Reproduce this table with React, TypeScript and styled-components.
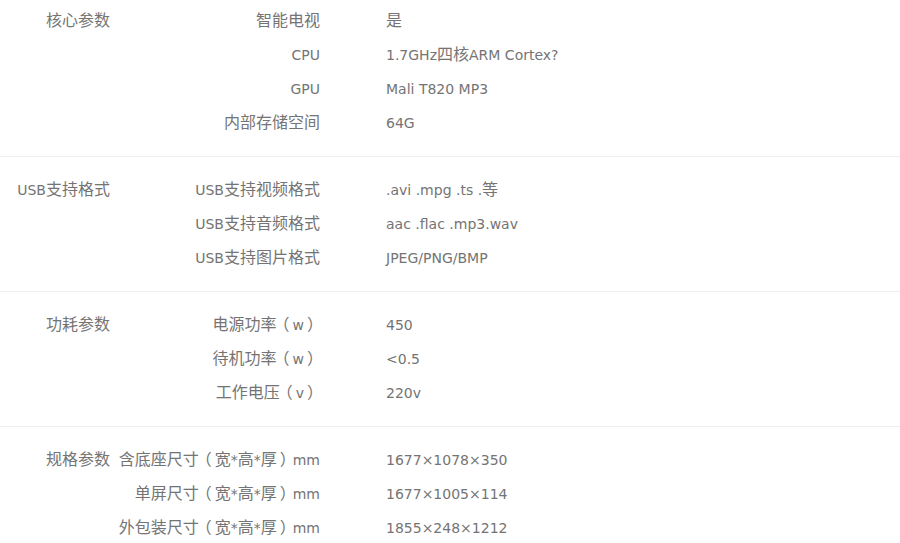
import React from "react";
import styled, { createGlobalStyle } from "styled-components";

const Global = createGlobalStyle`
  html, body { margin: 0; padding: 0; background: #fff; }
  body { font-family: "DejaVu Sans", "Noto Sans CJK SC", sans-serif; }
`;

const Page = styled.div`
  width: 900px;
  display: flex;
  flex-direction: column;
`;

const Section = styled.section<{ $first?: boolean; $last?: boolean }>`
  display: grid;
  grid-template-columns: 110px 210px 1fr;
  grid-auto-rows: 34px;
  padding: ${(p) => (p.$first ? "4px" : "16px")} 0 16px;
  border-bottom: ${(p) => (p.$last ? "none" : "1px solid #eeeeee")};
  color: #747474;
  font-size: 14px;
`;

const Category = styled.div<{ $rows: number }>`
  grid-column: 1;
  grid-row: 1 / span ${(p) => p.$rows};
  text-align: right;
  line-height: 34px;
  white-space: nowrap;
`;

const Label = styled.div`
  grid-column: 2;
  text-align: right;
  line-height: 34px;
  white-space: nowrap;
`;

const Value = styled.div`
  grid-column: 3;
  padding-left: 66px;
  line-height: 34px;
  white-space: nowrap;
`;

const Han = styled.span`
  font-family: "Noto Sans CJK SC", sans-serif;
  font-size: 16px;
  line-height: 1;
`;

const Paren = styled.span<{ $open: boolean }>`
  font-family: "Noto Sans CJK SC", sans-serif;
  font-size: 16px;
  line-height: 1;
  margin: ${(p) => (p.$open ? "0 3px 0 -3px" : "0 -3px 0 3px")};
`;

function Rich({ text }: { text: string }) {
  const parts = text.split(/([\u4e00-\u9fff]+|[（）])/).filter(Boolean);
  return (
    <>
      {parts.map((s, i) => {
        if (s === "（" || s === "）") return <Paren key={i} $open={s === "（"}>{s}</Paren>;
        if (/[\u4e00-\u9fff]/.test(s)) return <Han key={i}>{s}</Han>;
        return <React.Fragment key={i}>{s}</React.Fragment>;
      })}
    </>
  );
}

type Group = { title: string; rows: [string, string][] };

const groups: Group[] = [
  {
    title: "核心参数",
    rows: [
      ["智能电视", "是"],
      ["CPU", "1.7GHz四核ARM Cortex?"],
      ["GPU", "Mali T820 MP3"],
      ["内部存储空间", "64G"],
    ],
  },
  {
    title: "USB支持格式",
    rows: [
      ["USB支持视频格式", ".avi .mpg .ts .等"],
      ["USB支持音频格式", "aac .flac .mp3.wav"],
      ["USB支持图片格式", "JPEG/PNG/BMP"],
    ],
  },
  {
    title: "功耗参数",
    rows: [
      ["电源功率（w）", "450"],
      ["待机功率（w）", "<0.5"],
      ["工作电压（v）", "220v"],
    ],
  },
  {
    title: "规格参数",
    rows: [
      ["含底座尺寸（宽*高*厚）mm", "1677×1078×350"],
      ["单屏尺寸（宽*高*厚）mm", "1677×1005×114"],
      ["外包装尺寸（宽*高*厚）mm", "1855×248×1212"],
    ],
  },
];

export default function App() {
  return (
    <>
      <Global />
      <Page>
        {groups.map((g, gi) => (
          <Section key={g.title} $first={gi === 0} $last={gi === groups.length - 1}>
            <Category $rows={g.rows.length}>
              <Rich text={g.title} />
            </Category>
            {g.rows.map(([l, v]) => (
              <React.Fragment key={l}>
                <Label>
                  <Rich text={l} />
                </Label>
                <Value>
                  <Rich text={v} />
                </Value>
              </React.Fragment>
            ))}
          </Section>
        ))}
      </Page>
    </>
  );
}
